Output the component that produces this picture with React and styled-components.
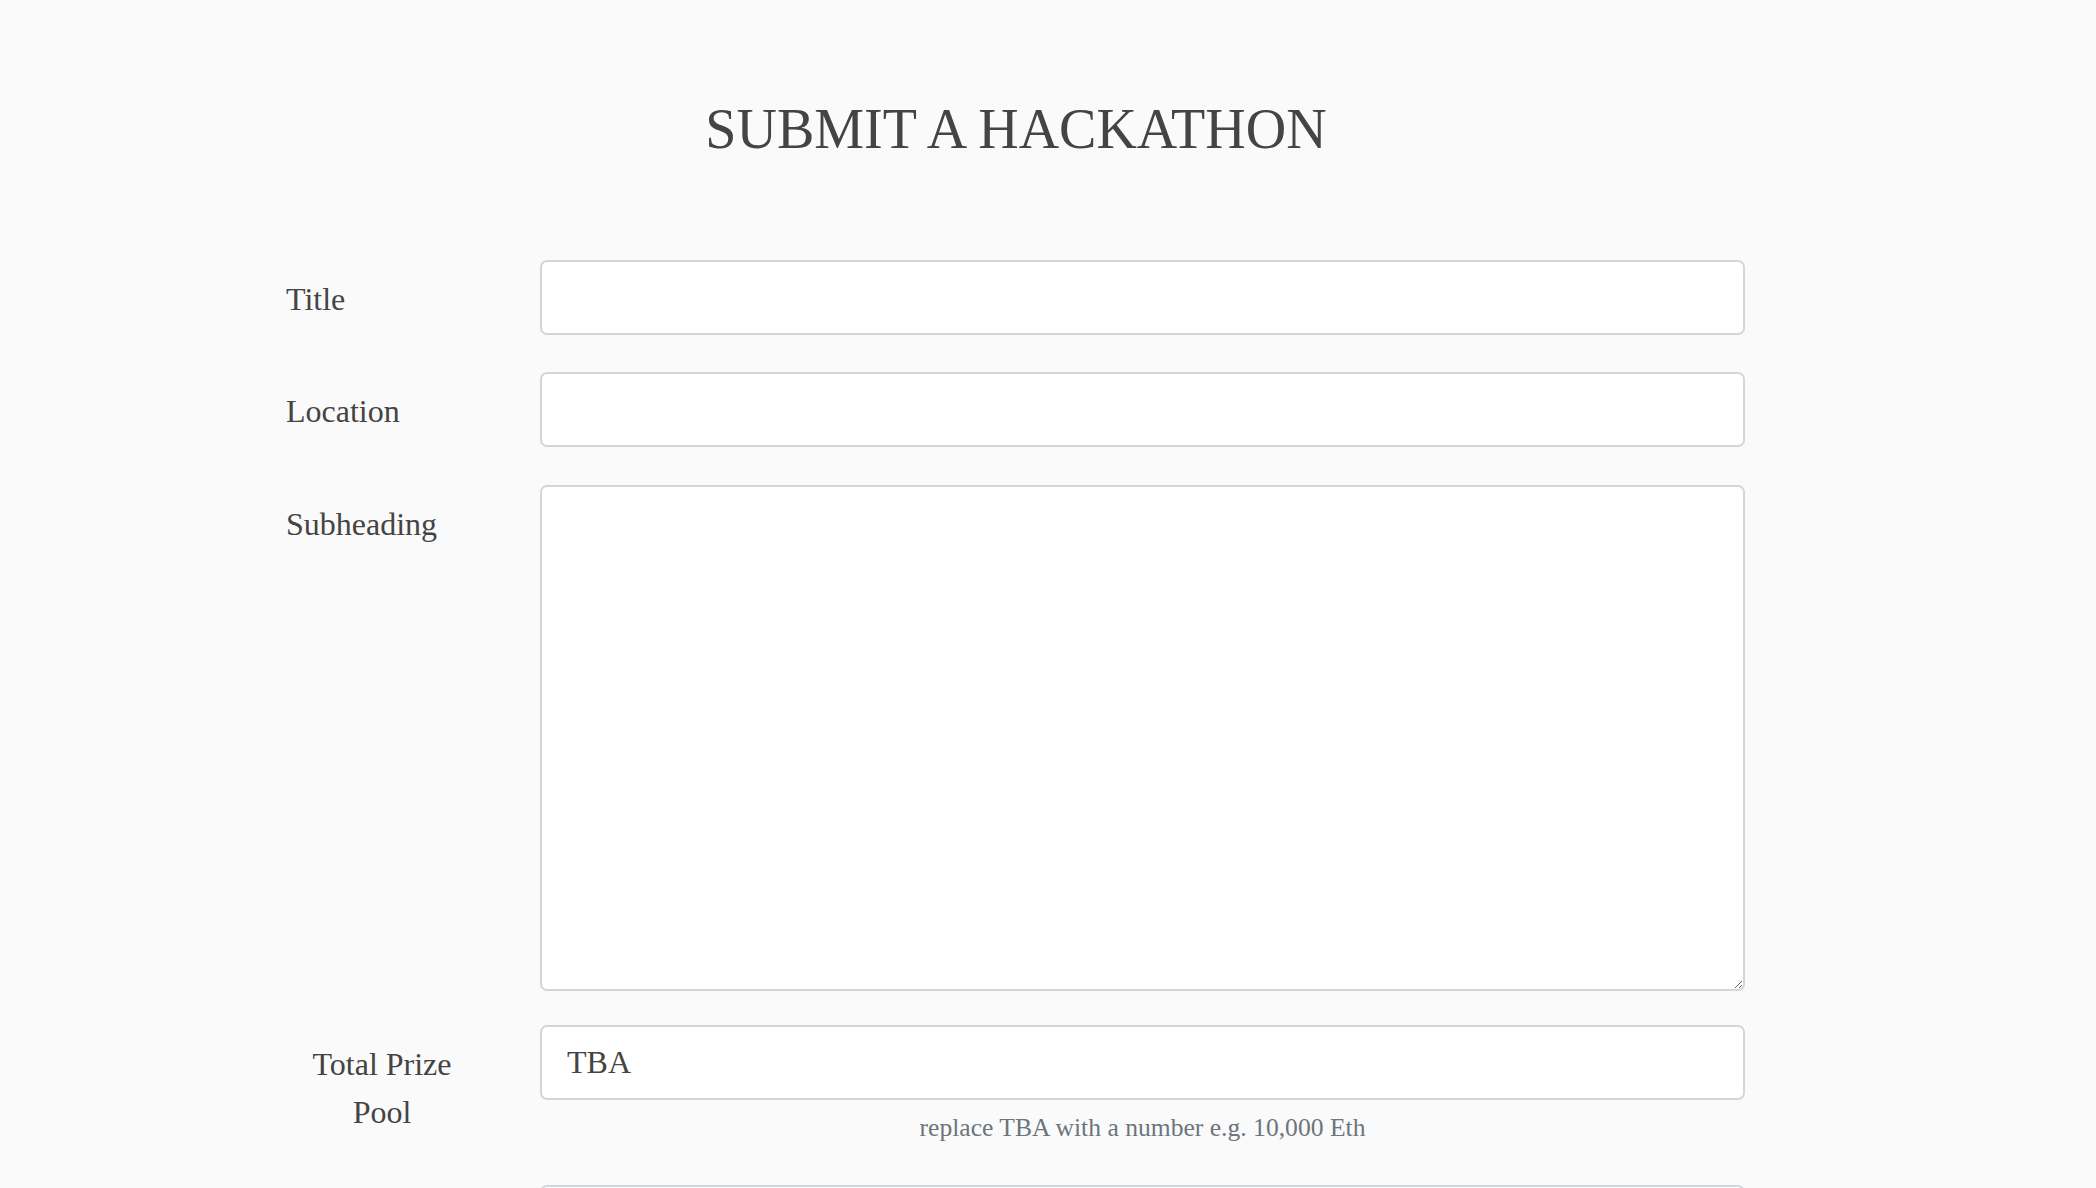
import React from 'react'
import styled, { createGlobalStyle } from 'styled-components'

const GlobalStyle = createGlobalStyle`
  html, body {
    margin: 0;
    padding: 0;
    background: #fafafa;
    font-family: "Liberation Serif", "Times New Roman", serif;
    color: #444;
  }
  * { box-sizing: border-box; }
`

function App() {
  return (
    <>
      <GlobalStyle />
      <StPage>
        <StContainer>
          <StH1>SUBMIT A HACKATHON</StH1>
          <StForm onSubmit={(e) => e.preventDefault()}>
            <StRow $gap="37px">
              <StLabel htmlFor="title">Title</StLabel>
              <StField>
                <StInput id="title" type="text" />
              </StField>
            </StRow>
            <StRow $gap="38px">
              <StLabel htmlFor="location">Location</StLabel>
              <StField>
                <StInput id="location" type="text" />
              </StField>
            </StRow>
            <StRow $gap="34px">
              <StLabel htmlFor="subheading">Subheading</StLabel>
              <StField>
                <StTextarea id="subheading" />
              </StField>
            </StRow>
            <StRow $gap="38px">
              <StLabel htmlFor="prize" $center>Total Prize Pool</StLabel>
              <StField>
                <StInput id="prize" type="text" defaultValue="TBA" />
                <StHelp>replace TBA with a number e.g. 10,000 Eth</StHelp>
              </StField>
            </StRow>
            <StRow $gap="37px">
              <StLabel htmlFor="next" />
              <StField>
                <StInput id="next" type="text" />
              </StField>
            </StRow>
          </StForm>
        </StContainer>
      </StPage>
    </>
  )
}

const StPage = styled.div`
  width: 2096px;
  height: 1188px;
  overflow: hidden;
  padding-top: 97px;
`
const StContainer = styled.div`
  width: 1500px;
  margin-left: 266px;
  padding: 0 20px;
`
const StH1 = styled.h1`
  margin: 0 0 99px;
  text-align: center;
  font-weight: normal;
  font-size: 56px;
  line-height: 64px;
  color: #444;
`
const StForm = styled.form`
  display: flex;
  flex-direction: column;
`
const StRow = styled.div`
  display: grid;
  grid-template-columns: 192px 1205px;
  column-gap: 62px;
  align-items: start;
  margin-bottom: ${(p) => p.$gap};
`
const StLabel = styled.label`
  padding-top: 15px;
  font-size: 32px;
  line-height: 48px;
  color: #444;
  text-align: ${(p) => (p.$center ? 'center' : 'left')};
`
const StField = styled.div`
  display: flex;
  flex-direction: column;
`
const StInput = styled.input`
  width: 100%;
  height: 75px;
  padding: 0 25px;
  border: 2px solid #d2d6dc;
  border-radius: 7px;
  background: #fff;
  font-family: "Liberation Serif", "Times New Roman", serif;
  font-size: 32px;
  color: #444;
  outline: none;
`
const StTextarea = styled.textarea`
  width: 100%;
  height: 506px;
  padding: 12px 25px;
  border: 2px solid #d2d6dc;
  border-radius: 7px;
  background: #fff;
  font-family: "Liberation Serif", "Times New Roman", serif;
  font-size: 32px;
  color: #444;
  resize: vertical;
  outline: none;
`
const StHelp = styled.small`
  display: block;
  margin-top: 9px;
  text-align: center;
  font-size: 25.6px;
  line-height: 38.4px;
  color: #6c757d;
`

export default App
